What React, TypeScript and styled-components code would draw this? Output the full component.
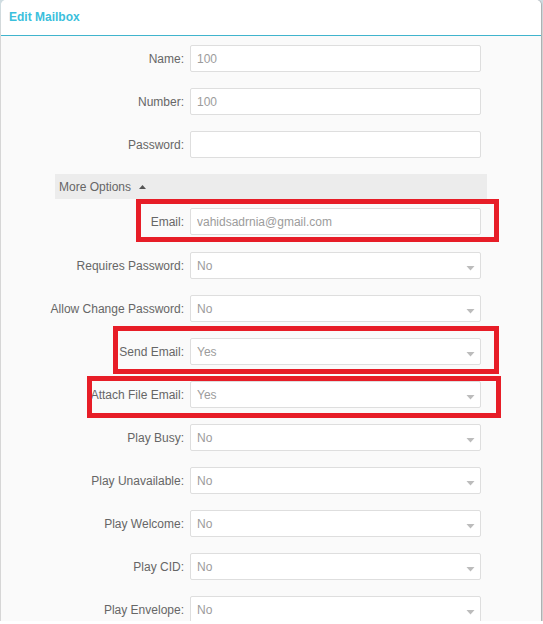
import React, { useState } from "react";
import styled, { createGlobalStyle, css } from "styled-components";

const GlobalStyle = createGlobalStyle`
  *, *::before, *::after { box-sizing: border-box; }
  body {
    margin: 0;
    background: #fff;
    font-family: "Liberation Sans", Arial, sans-serif;
    font-size: 12px;
    color: #666;
  }
`;

const Viewport = styled.div`
  height: calc(100vh - 3px);
  padding: 0 2px 0 1px;
  overflow: hidden;
  background: linear-gradient(#cfdde2, #d6d6d6 40px);
`;

const Dialog = styled.section`
  min-height: 100%;
  background: #fafafa;
  border-radius: 5px 5px 0 0;
  box-shadow: 1px 0 1px #a9adaf;
`;

const Header = styled.header`
  height: 36px;
  padding: 0 8px;
  border-bottom: 1px solid #40b4cd;
  border-radius: 5px 5px 0 0;
  background: #fff;
`;

const Title = styled.h1`
  margin: 0;
  font-size: 12px;
  line-height: 34px;
  color: #3bbfdc;
`;

const Form = styled.form`
  display: flex;
  flex-direction: column;
  gap: 16px;
  padding: 9px 54px 16px;
`;

const Group = styled.div`
  display: flex;
  flex-direction: column;
  gap: 16px;
`;

const EmailGroup = styled(Group)`
  gap: 17px;
`;

const Options = styled.div`
  display: flex;
  flex-direction: column;
  gap: 9px;
`;

type Inset = { top: number; right: number; bottom: number; left: number };

const Row = styled.div<{ $mark?: Inset }>`
  position: relative;
  display: grid;
  grid-template-columns: 129px 1fr;
  column-gap: 6px;
  align-items: center;
  padding-right: 6px;

  ${({ $mark }) =>
    $mark &&
    css`
      &::after {
        content: "";
        position: absolute;
        top: -${$mark.top}px;
        right: -${$mark.right}px;
        bottom: -${$mark.bottom}px;
        left: ${$mark.left}px;
        border: 5px solid #e71d27;
        pointer-events: none;
      }
    `}
`;

const Label = styled.label`
  justify-self: end;
  white-space: nowrap;
  line-height: 26px;
`;

const controlStyle = css`
  display: block;
  width: 100%;
  height: 27px;
  margin: 0;
  padding: 0 6px;
  border: 1px solid #dedede;
  border-radius: 2px;
  background: #fff;
  color: #9c9c9c;
  font: inherit;
  outline: none;

  &:focus-visible {
    border-color: #3bbfdc;
  }
`;

const TextInput = styled.input`
  ${controlStyle}
`;

const SelectInput = styled.select`
  ${controlStyle}
  appearance: none;
`;

const SelectBox = styled.div`
  position: relative;
`;

const SelectArrow = styled.svg`
  position: absolute;
  right: 6px;
  bottom: 8px;
  fill: #bcbcbc;
  pointer-events: none;
`;

const MoreButton = styled.button`
  display: flex;
  align-items: center;
  gap: 8px;
  height: 25px;
  padding: 0 4px;
  border: 0;
  background: #ececec;
  color: inherit;
  font: inherit;
  text-align: left;
  cursor: pointer;
`;

const CaretUp = styled.svg`
  fill: #555;
`;

function TextField({ id, label, value, type = "text", mark }: {
  id: string; label: string; value: string; type?: string; mark?: Inset;
}) {
  return (
    <Row $mark={mark}>
      <Label htmlFor={id}>{label}:</Label>
      <TextInput id={id} type={type} defaultValue={value} />
    </Row>
  );
}

function SelectField({ id, label, value, mark }: {
  id: string; label: string; value: string; mark?: Inset;
}) {
  return (
    <Row $mark={mark}>
      <Label htmlFor={id}>{label}:</Label>
      <SelectBox>
        <SelectInput id={id} defaultValue={value}>
          <option>Yes</option>
          <option>No</option>
        </SelectInput>
        <SelectArrow width="9" height="5" viewBox="0 0 9 5" aria-hidden="true">
          <path d="M0.5 0h8L4.5 4.5z" />
        </SelectArrow>
      </SelectBox>
    </Row>
  );
}

const selects: { id: string; label: string; value: string; mark?: Inset }[] = [
  { id: "requires-password", label: "Requires Password", value: "No" },
  { id: "allow-change", label: "Allow Change Password", value: "No" },
  { id: "send-email", label: "Send Email", value: "Yes", mark: { top: 12, right: 12, bottom: 9, left: 58 } },
  { id: "attach-file", label: "Attach File Email", value: "Yes", mark: { top: 5, right: 14, bottom: 10, left: 32 } },
  { id: "play-busy", label: "Play Busy", value: "No" },
  { id: "play-unavailable", label: "Play Unavailable", value: "No" },
  { id: "play-welcome", label: "Play Welcome", value: "No" },
  { id: "play-cid", label: "Play CID", value: "No" },
  { id: "play-envelope", label: "Play Envelope", value: "No" },
];

export default function App() {
  const [open, setOpen] = useState(true);
  return (
    <>
      <GlobalStyle />
      <Viewport>
        <Dialog aria-labelledby="dialog-title">
          <Header>
            <Title id="dialog-title">Edit Mailbox</Title>
          </Header>
          <Form>
            <Group>
              <TextField id="name" label="Name" value="100" />
              <TextField id="number" label="Number" value="100" />
              <TextField id="password" label="Password" value="" type="password" />
            </Group>
            <Options>
              <MoreButton type="button" aria-expanded={open} onClick={() => setOpen(!open)}>
                More Options
                <CaretUp width="7" height="4" viewBox="0 0 7 4" aria-hidden="true">
                  <path d="M0 4L3.5 0L7 4z" />
                </CaretUp>
              </MoreButton>
              {open && (
                <EmailGroup>
                  <TextField
                    id="email"
                    label="Email"
                    value="vahidsadrnia@gmail.com"
                    mark={{ top: 9, right: 12, bottom: 7, left: 81 }}
                  />
                  <Group>
                    {selects.map((field) => (
                      <SelectField key={field.id} {...field} />
                    ))}
                  </Group>
                </EmailGroup>
              )}
            </Options>
          </Form>
        </Dialog>
      </Viewport>
    </>
  );
}
